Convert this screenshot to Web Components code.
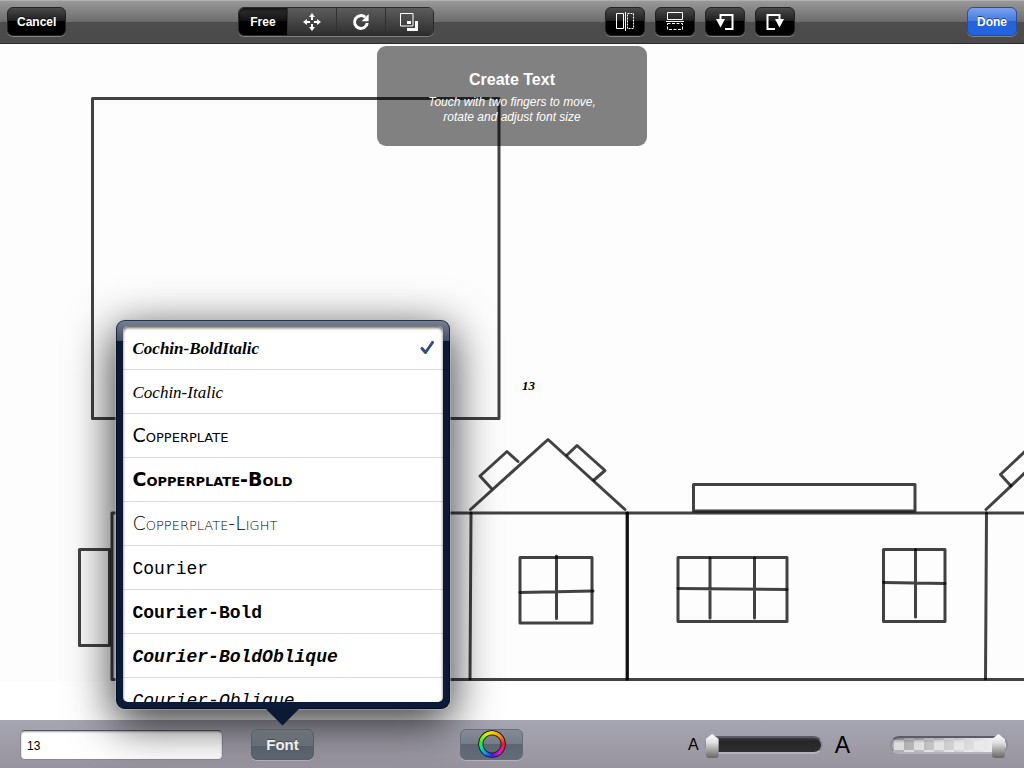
<!DOCTYPE html>
<html lang="en">
<head>
<meta charset="utf-8">
<title>Create Text</title>
<style>
html, body { height: 100%; margin: 0; }
body { font-family: "Liberation Sans", Arial, sans-serif; background: #fff; overflow: hidden; }
</style>
</head>
<body>
<drawing-app></drawing-app>
<script>
const define = (name, html, setup) => customElements.define(name, class extends HTMLElement {
  constructor() {
    super();
    this.attachShadow({ mode: "open" }).innerHTML = html;
  }
  connectedCallback() { if (setup) setup(this, this.shadowRoot); }
});

/* Glossy button of the top bar */
define("bar-button", `
<style>
:host { display: block; }
button {
  box-sizing: border-box; display: flex; align-items: center; justify-content: center;
  min-width: 40px; height: 29px; margin: 0; padding: 0 9px;
  font: bold 12px "Liberation Sans", Arial, sans-serif; color: #fff; text-shadow: 0 -1px 0 rgba(0,0,0,.5);
  border: 1px solid #222; border-radius: 6px;
  background: linear-gradient(#4a4a4a, #1c1c1c 50%, #000 50%, #000);
  box-shadow: 0 1px 0 rgba(255,255,255,.3);
}
:host([icon]) button { padding: 0; }
:host([primary]) button {
  border-color: #2c4c94;
  background: linear-gradient(#7ba1ee, #4078e4 50%, #2463de 50%, #2364e0);
}
</style>
<button type="button"><slot></slot></button>`, (host, root) => {
  const label = host.getAttribute("label");
  if (label) root.querySelector("button").setAttribute("aria-label", label);
});

/* Segmented mode switch */
define("mode-switch", `
<style>
:host { display: block; }
div {
  display: flex; box-sizing: border-box; height: 29px; overflow: hidden;
  border: 1px solid #2a2a2a; border-radius: 6px; box-shadow: 0 1px 0 rgba(255,255,255,.3);
}
button {
  box-sizing: border-box; width: 49px; height: 27px; margin: 0; padding: 0; border: 0; border-left: 1px solid #303030;
  display: flex; align-items: center; justify-content: center; color: #fff;
  font: bold 12px "Liberation Sans", Arial, sans-serif;
  background: linear-gradient(#5c5c5c, #2e2e2e);
}
button:first-child { width: 48px; border-left: 0; }
button:last-child { width: 48px; }
button[aria-pressed=true] { background: linear-gradient(#303030, #111 50%, #000 50%); box-shadow: inset 0 2px 3px rgba(0,0,0,.6); }
</style>
<div role="group" aria-label="Mode">
  <button type="button" aria-pressed="true">Free</button>
  <button type="button" aria-pressed="false" aria-label="Move">
    <svg width="18" height="18" viewBox="0 0 18 18" fill="#fff"><path d="M9 0l3 4h-2v3H8V4H6zM9 18l-3-4h2v-3h2v3h2zM0 9l4-3v2h3v2H4v2zM18 9l-4 3v-2h-3V8h3V6z"/></svg>
  </button>
  <button type="button" aria-pressed="false" aria-label="Rotate">
    <svg width="18" height="18" viewBox="0 0 18 18"><path d="M13.2 4.2A6.4 6.4 0 1 0 15.3 10" fill="none" stroke="#fff" stroke-width="3"/><path d="M16.6 1v7.2H9.6z" fill="#fff"/></svg>
  </button>
  <button type="button" aria-pressed="false" aria-label="Scale">
    <svg width="18" height="18" viewBox="0 0 18 18"><path d="M.5.500h12.500v12.500H.5z" fill="none" stroke="#fff"/><path d="M7 8h4v3H7zM15 8h3v10H7v-3h8z" fill="#fff"/></svg>
  </button>
</div>`);

define("top-bar", `
<style>
:host {
  display: flex; align-items: center; justify-content: space-between; box-sizing: border-box;
  height: 44px; padding: 0 7px 1px; border-top: 1px solid #b0b0b0; border-bottom: 1px solid #2d2d2d;
  background: linear-gradient(#999, #6b6b6b 50%, #4d4d4d 50%, #4a4a4a);
}
nav { display: flex; gap: 10px; }
svg { display: block; }
</style>
<bar-button>Cancel</bar-button>
<mode-switch></mode-switch>
<nav aria-label="Flip and rotate">
  <bar-button icon label="Flip horizontally"><svg width="18" height="19" viewBox="0 0 18 19" fill="none" stroke="#fff"><path d="M.5 1.500h7v15h-7zM9.500 0v19"/><path d="M11.500 1.500h6v15h-6z" stroke-dasharray="2 1"/></svg></bar-button>
  <bar-button icon label="Flip vertically"><svg width="18" height="19" viewBox="0 0 18 19" fill="none" stroke="#fff"><path d="M1.500.500h15v7h-15zM0 9.500h18"/><path d="M1.500 11.500h15v6h-15z" stroke-dasharray="3 1.500"/></svg></bar-button>
  <bar-button icon label="Rotate left"><svg width="18" height="18" viewBox="0 0 18 18"><path d="M4.500 7V2h12v14H9" fill="none" stroke="#fff" stroke-width="2"/><path d="M0 6h9L4.500 14.500z" fill="#fff"/></svg></bar-button>
  <bar-button icon label="Rotate right"><svg width="18" height="18" viewBox="0 0 18 18"><path d="M13.500 7V2h-12v14H9" fill="none" stroke="#fff" stroke-width="2"/><path d="M18 6H9l4.500 8.500z" fill="#fff"/></svg></bar-button>
</nav>
<bar-button primary>Done</bar-button>`);

/* The drawing itself: houses, windows and the text being placed */
define("drawing-canvas", `
<style>
:host { display: block; position: relative; overflow: hidden; background: #fff; }
svg { display: block; width: 100%; height: 100%; }
text { font: italic bold 13px "Liberation Serif", "Times New Roman", serif; }
::slotted(*) { position: absolute; top: 2px; left: 50%; transform: translateX(-50%); }
</style>
<svg viewBox="0 44 1024 676" preserveAspectRatio="xMinYMin slice" role="img" aria-label="Row of houses">
  <rect y="44" width="1024" height="638" fill="#fdfdfd"/>
  <g fill="none" stroke="#000" stroke-opacity=".74" stroke-width="3" stroke-linejoin="round" stroke-linecap="round">
    <path d="M92.500 98.500H499V418.500H92.500z"/>
    <path d="M79.500 549.500H109.500V645.500H79.500z"/>
    <path d="M1030 513H112V679.500H1030"/>
    <path d="M470.500 509.500L548 439.500L625 509.500"/>
    <path d="M491 488L480 476L507 451.500L518 461.500"/>
    <path d="M567 455L577 445.500L605 470.500L594 480"/>
    <path d="M471 513L470 679"/>
    <path d="M627 513V679"/><path d="M627.500 513V679"/>
    <path d="M693.500 484.500H915V511H693.500z"/>
    <path d="M986.500 513L985.500 679"/>
    <path d="M986 509.500L1030 468"/>
    <path d="M1011 486L1000.500 474.500L1027 449.500"/>
    <path d="M520 557.500H592V623H520z"/><path d="M556.500 556V618.500M520 592.500L593 591"/>
    <path d="M678 557.500H787V621.500H678z"/><path d="M710 558V618M754.500 558V618M678 588.500L787 589.500"/>
    <path d="M883.500 549.500H945V621.500H883.500z"/><path d="M915.500 549.500V617M883.500 582.500L945 583.500"/>
  </g>
  <text x="522" y="390">13</text>
</svg>
<slot></slot>`);

define("hint-panel", `
<style>
:host {
  display: block; box-sizing: border-box; width: 270px; height: 100px; padding: 24px 45px 0;
  border-radius: 9px; background: rgba(0,0,0,.49); color: #fff; text-align: center;
}
h2 { margin: 0 0 6px; font-size: 16px; line-height: 19px; font-weight: bold; }
p { margin: 0; font-size: 12px; line-height: 15px; font-style: italic; }
</style>
<h2>Create Text</h2>
<p>Touch with two fingers to move, rotate and adjust font size</p>`);

/* One row of the font list */
define("font-row", `
<style>
:host { display: block; }
button {
  box-sizing: border-box; display: flex; align-items: center; justify-content: space-between;
  width: 100%; height: 44px; margin: 0; padding: var(--row-drop, 0) 8px 0 10px; border: 0; border-bottom: 1px solid #dcdcdc;
  background: none; color: #000; font: inherit; font-variant: inherit; text-align: left;
}
svg { display: none; }
:host([selected]) svg { display: block; }
</style>
<button type="button"><span><slot></slot></span>
<svg width="15" height="15" viewBox="0 0 15 15"><path d="M2 7.500L5.500 11.500L12.500 1.500" fill="none" stroke="#35507f" stroke-width="3" stroke-linecap="round" stroke-linejoin="round"/></svg></button>`,
(host, root) => root.querySelector("button").setAttribute("aria-pressed", host.hasAttribute("selected")));

define("font-popover", `
<style>
:host {
  display: block; box-sizing: border-box; width: 334px; padding: 6px 7px 7px; border-radius: 9px;
  background: linear-gradient(#7a8297, #434d67 21px, #0b1934 21px, #0b1a38);
  box-shadow: inset 0 0 0 1px rgba(0,8,28,.65), 0 0 1px 1px rgba(190,200,210,.5), 0 12px 46px 2px rgba(0,0,0,.8);
}
:host::after {
  content: ""; position: absolute; top: 100%; left: 50%; width: 36px; height: 18px; margin-left: -18px; margin-top: -1px;
  background: #0b1934; clip-path: polygon(0 0, 100% 0, 50% 100%);
}
.list { position: relative; height: 376px; overflow: hidden; border-radius: 5px; background: #fff; }
.list::after { content: ""; position: absolute; inset: 0; pointer-events: none; border-radius: 5px; box-shadow: inset 0 2px 3px rgba(0,0,0,.6); }
.cochin { font: italic 17px "Liberation Serif", "Times New Roman", serif; --row-drop: 3px; }
.copper { font: 19px "DejaVu Sans", sans-serif; font-variant: small-caps; }
.courier { font: 18px "Liberation Mono", "Courier New", monospace; --row-drop: 4px; }
.bold { font-weight: bold; }
.light { font-weight: 200; }
.oblique { font-style: italic; }
</style>
<div class="list" role="group" aria-label="Fonts">
  <font-row class="cochin bold" selected>Cochin-BoldItalic</font-row>
  <font-row class="cochin">Cochin-Italic</font-row>
  <font-row class="copper">Copperplate</font-row>
  <font-row class="copper bold">Copperplate-Bold</font-row>
  <font-row class="copper light">Copperplate-Light</font-row>
  <font-row class="courier">Courier</font-row>
  <font-row class="courier bold">Courier-Bold</font-row>
  <font-row class="courier bold oblique">Courier-BoldOblique</font-row>
  <font-row class="courier oblique">Courier-Oblique</font-row>
</div>`);

/* Grey-blue button of the bottom bar; the popover slot opens above it */
define("tool-button", `
<style>
:host { display: block; position: relative; }
button {
  position: relative; z-index: 3;
  box-sizing: border-box; display: flex; align-items: center; justify-content: center;
  width: 63px; height: 31px; margin: 0; padding: 0; border: 1px solid #666d78; border-radius: 6px;
  font: bold 15px "Liberation Sans", Arial, sans-serif; color: #eef0f4; text-shadow: 0 -1px 0 rgba(0,0,0,.35);
  background: linear-gradient(#858c97, #737b86 50%, #5c6571 50%, #626b77);
  box-shadow: 0 1px 0 rgba(255,255,255,.25);
}
:host([open]) button {
  border-color: #565d66;
  background: linear-gradient(#6c7279, #666d75 55%, #565e69 55%, #5c6571);
}
::slotted([slot=popover]) { position: absolute; z-index: 2; bottom: calc(100% + 20px); left: 50%; transform: translateX(-50%); }
</style>
<button type="button"><slot></slot></button>
<slot name="popover"></slot>`, (host, root) => {
  const label = host.getAttribute("label");
  if (label) root.querySelector("button").setAttribute("aria-label", label);
});

define("colour-ring", `
<style>
:host { display: block; }
.edge { width: 28px; height: 28px; border-radius: 50%; background: #222; -webkit-mask: radial-gradient(circle, transparent 8px, #000 9px); mask: radial-gradient(circle, transparent 8px, #000 9px); padding: 1px; box-sizing: border-box; }
.hue { height: 26px; border-radius: 50%; background: conic-gradient(#ffd800, #ff8a10 45deg, #f8142c 90deg, #f010d8 140deg, #3a18f4 180deg, #1090ff 215deg, #00e0a0 250deg, #30f020 280deg, #c8f400 325deg, #ffd800); -webkit-mask: radial-gradient(circle, transparent 9px, #000 10px); mask: radial-gradient(circle, transparent 9px, #000 10px); }
</style>
<div class="edge"><div class="hue"></div></div>`);

define("value-slider", `
<style>
:host { display: block; width: 118px; height: 24px; }
input {
  -webkit-appearance: none; appearance: none; display: block; width: 100%; height: 24px; margin: 0; background: none;
}
input::-webkit-slider-runnable-track {
  box-sizing: border-box; height: 18px; border: 2px solid #8f8d9b; border-top-color: #5d5c66; border-bottom-color: #b4b3bd; border-radius: 9px;
  background: linear-gradient(#3e3e40, #262626 3px, #2e2e2e);
}
input::-webkit-slider-thumb {
  -webkit-appearance: none; width: 13px; height: 24px; margin: -4px -1px 0; border: 0; border-radius: 3px;
  background: linear-gradient(#fff, #e2e2e2 35%, #8a8a8a 80%, #666);
  clip-path: polygon(0 5px, 50% 0, 100% 5px, 100% 100%, 0 100%);
}
:host([opacity]) input::-webkit-slider-runnable-track {
  background: linear-gradient(90deg, transparent 10%, #ececec 88%),
    linear-gradient(rgba(80,80,80,.5), transparent 5px),
    repeating-conic-gradient(#b0b0b0 0 25%, #dcdcdc 0 50%) 2px 2px / 20px 20px;
}
</style>
<input type="range" min="0" max="100">`, (host, root) => {
  const input = root.querySelector("input");
  input.value = host.getAttribute("value");
  input.setAttribute("aria-label", host.getAttribute("label"));
});

define("bottom-bar", `
<style>
:host {
  display: grid; grid-template-columns: auto 8fr auto 9fr auto; align-items: center; box-sizing: border-box;
  height: 48px; padding: 0 16px 0 20px; position: relative; z-index: 1;
  background: linear-gradient(#a6a5b2, #98949f);
}
.left { display: flex; align-items: center; gap: 28px; }
.colour { grid-column: 3; }
.right { grid-column: 5; display: flex; align-items: center; gap: 40px; padding-top: 2px; }
.size { display: flex; align-items: center; gap: 6px; }
.small { font-size: 16px; }
.large { font-size: 23px; margin-left: 6px; }
.text {
  box-sizing: border-box; width: 203px; height: 30px; margin: 2px 0 0; padding: 2px 6px 0; border: 1px solid #8a8893; border-top-color: #55545c;
  border-radius: 5px; background: #fff; box-shadow: inset 0 1px 2px rgba(0,0,0,.35);
  font: 12px "Liberation Sans", Arial, sans-serif; color: #000;
}
</style>
<div class="left">
  <input class="text" type="text" value="13" aria-label="Text">
  <tool-button open>Font<font-popover slot="popover"></font-popover></tool-button>
</div>
<tool-button class="colour" label="Colour"><colour-ring></colour-ring></tool-button>
<div class="right">
  <div class="size"><span class="small">A</span><value-slider label="Font size" value="0"></value-slider><span class="large">A</span></div>
  <value-slider opacity label="Opacity" value="100"></value-slider>
</div>`);

define("drawing-app", `
<style>
:host { display: flex; flex-direction: column; height: 100vh; }
drawing-canvas { flex: 1; min-height: 0; }
top-bar, bottom-bar { flex: none; }
</style>
<top-bar></top-bar>
<drawing-canvas><hint-panel></hint-panel></drawing-canvas>
<bottom-bar></bottom-bar>`);
</script>
</body>
</html>
